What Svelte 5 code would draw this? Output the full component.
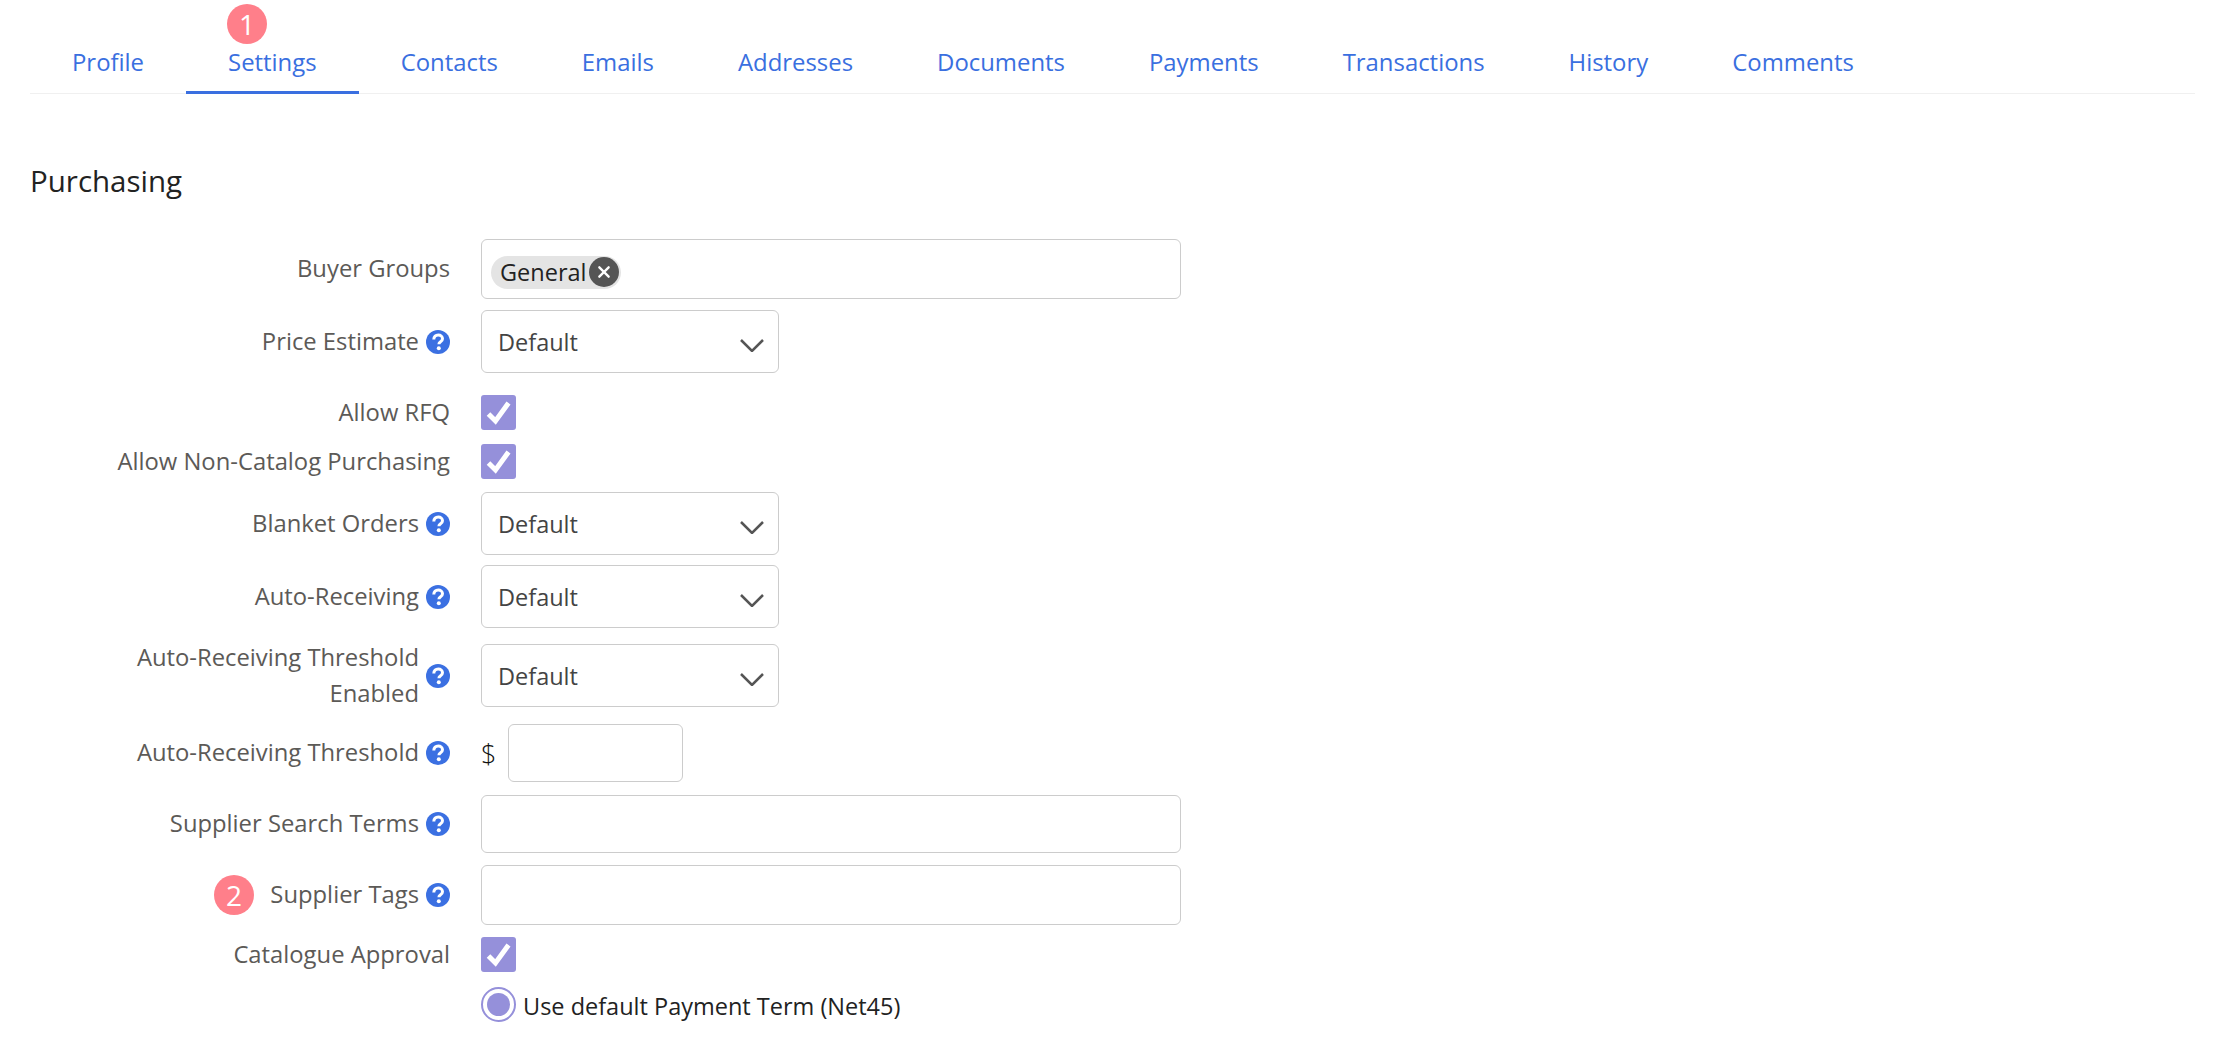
<script>
  const tabs = ['Profile', 'Settings', 'Contacts', 'Emails', 'Addresses', 'Documents', 'Payments', 'Transactions', 'History', 'Comments'];
  const rows = [
    { label: 'Buyer Groups', kind: 'chips', gap: 11 },
    { label: 'Price Estimate', help: true, kind: 'select', gap: 22 },
    { label: 'Allow RFQ', kind: 'check', gap: 14 },
    { label: 'Allow Non-Catalog Purchasing', kind: 'check', gap: 13 },
    { label: 'Blanket Orders', help: true, kind: 'select', gap: 10 },
    { label: 'Auto-Receiving', help: true, kind: 'select', gap: 16 },
    { label: 'Auto-Receiving Threshold Enabled', help: true, kind: 'select', gap: 17 },
    { label: 'Auto-Receiving Threshold', help: true, kind: 'money', gap: 13 },
    { label: 'Supplier Search Terms', help: true, kind: 'text', gap: 12, short: true },
    { label: 'Supplier Tags', help: true, kind: 'text', gap: 12, badge: '2' },
    { label: 'Catalogue Approval', kind: 'check', gap: 14 }
  ];
</script>

<main class="page">
  <nav class="tabs">
    {#each tabs as tab}
      <a class="tab" class:active={tab === 'Settings'} href="#{tab.toLowerCase()}">
        {tab}
        {#if tab === 'Settings'}<span class="badge tab-badge">1</span>{/if}
      </a>
    {/each}
  </nav>

  <h2>Purchasing</h2>

  <form class="form">
    {#each rows as row}
      <div class="row" style="margin-bottom: {row.gap}px">
        <div class="label">
          {#if row.badge}<span class="badge row-badge">{row.badge}</span>{/if}
          <span class="label-text" class:narrow={row.label.endsWith('Enabled')}>{row.label}</span>
          {#if row.help}
            <svg class="help" viewBox="0 0 24 24" aria-hidden="true">
              <circle cx="12" cy="12" r="12" fill="#3b70e2" />
              <path d="M7.800 9.400c0-2.800 1.900-4.400 4.400-4.400 2.500 0 4.300 1.500 4.300 3.700 0 1.800-1 2.600-2.200 3.400-1 .7-1.400 1.100-1.400 2.100" fill="none" stroke="#fff" stroke-width="3" />
              <circle cx="12.800" cy="18.300" r="2" fill="#fff" />
            </svg>
          {/if}
        </div>

        {#if row.kind === 'chips'}
          <div class="input wide chips">
            <span class="chip">General
              <span class="chip-x">
                <svg viewBox="0 0 12 12" aria-hidden="true"><path d="M2 2l8 8M10 2l-8 8" stroke="#fff" stroke-width="2" stroke-linecap="round" /></svg>
              </span>
            </span>
          </div>
        {:else if row.kind === 'select'}
          <div class="select">
            Default
            <svg class="chevron" viewBox="0 0 24 13" aria-hidden="true"><polyline points="1,1 12,12 23,1" /></svg>
          </div>
        {:else if row.kind === 'check'}
          <span class="check">
            <svg viewBox="0 0 35 35" aria-hidden="true"><path d="M7.500 19l7 7 13-18" fill="none" stroke="#fff" stroke-width="5" /></svg>
          </span>
        {:else if row.kind === 'money'}
          <span class="currency">$</span>
          <div class="input money"></div>
        {:else}
          <div class="input wide" class:short={row.short}></div>
        {/if}
      </div>
    {/each}

    <div class="row">
      <div class="label"></div>
      <span class="radio"><span class="radio-dot"></span></span>
      <span class="radio-text">Use default Payment Term (Net45)</span>
    </div>
  </form>
</main>

<style>
  :global(body) {
    margin: 0;
    background: #fff;
    font-family: "Open Sans", Lato, sans-serif;
    font-size: 23.500px;
  }

  .page {
    height: 1040px;
    overflow: hidden;
    padding: 0 35px 0 30px;
    box-sizing: border-box;
  }

  .tabs {
    display: flex;
    height: 94px;
    box-sizing: border-box;
    border-bottom: 1px solid #f0f0f0;
  }

  .tab {
    position: relative;
    padding: 47px 42px 0;
    color: #3a6fe0;
    font-size: 23.900px;
    text-decoration: none;
    line-height: 30px;
    height: 94px;
    box-sizing: border-box;
    white-space: nowrap;
  }

  .tab.active {
    border-bottom: 3px solid #3a6fe0;
  }

  .badge {
    position: absolute;
    display: flex;
    align-items: center;
    justify-content: center;
    width: 40px;
    height: 40px;
    border-radius: 50%;
    background: #ff7f8a;
    color: #fff;
    font-size: 28px;
    line-height: 1;
  }

  .tab-badge {
    left: 41px;
    top: 4px;
  }

  .row-badge {
    left: 184px;
    top: -3px;
  }

  h2 {
    margin: 68px 0 0;
    height: 77px;
    font-size: 29.500px;
    line-height: 38px;
    font-weight: 400;
    color: #222;
  }

  .form {
    display: flex;
    flex-direction: column;
  }

  .row {
    display: flex;
    align-items: center;
  }

  .label {
    position: relative;
    display: flex;
    align-items: center;
    justify-content: flex-end;
    flex: 0 0 420px;
    height: 34px;
    margin-right: 31px;
    color: #5c5a57;
    font-size: 23.800px;
    text-align: right;
    line-height: 36px;
  }

  .label-text {
    margin-top: -2px;
  }

  .label-text.narrow {
    width: 320px;
  }

  .help {
    flex: none;
    width: 24px;
    height: 24px;
    margin-left: 7px;
  }

  .input,
  .select {
    box-sizing: border-box;
    border: 1px solid #ccc;
    border-radius: 6px;
    background: #fff;
  }

  .input.wide {
    width: 700px;
    height: 60px;
  }

  .input.short {
    height: 58px;
  }

  .input.money {
    width: 175px;
    height: 58px;
  }

  .chips {
    display: flex;
    align-items: center;
    padding-left: 9px;
  }

  .chip {
    display: flex;
    align-items: center;
    height: 33px;
    margin-top: 6px;
    padding: 0 2px 0 9px;
    gap: 3px;
    border-radius: 17px;
    background: #e4e4e4;
    color: #222;
  }

  .chip-x {
    display: flex;
    align-items: center;
    justify-content: center;
    width: 30px;
    height: 30px;
    border-radius: 50%;
    background: #555;
  }

  .chip-x svg {
    width: 14px;
    height: 14px;
  }

  .select {
    position: relative;
    display: flex;
    align-items: center;
    width: 298px;
    height: 63px;
    padding-left: 16px;
    color: #444;
  }

  .chevron {
    position: absolute;
    right: 14px;
    top: 28px;
    width: 24px;
    height: 13px;
    fill: none;
    stroke: #555;
    stroke-width: 2.500;
  }

  .check {
    display: block;
    width: 35px;
    height: 35px;
    border-radius: 3px;
    background: #9590da;
  }

  .check svg {
    display: block;
  }

  .currency {
    width: 27px;
    font-size: 27px;
    font-weight: 300;
    color: #111;
  }

  .radio {
    display: flex;
    align-items: center;
    justify-content: center;
    box-sizing: border-box;
    width: 35px;
    height: 35px;
    border: 2px solid #9590da;
    border-radius: 50%;
  }

  .radio-dot {
    width: 23px;
    height: 23px;
    border-radius: 50%;
    background: #9590da;
  }

  .radio-text {
    margin-left: 7px;
    padding-top: 4px;
    color: #222;
  }
</style>
